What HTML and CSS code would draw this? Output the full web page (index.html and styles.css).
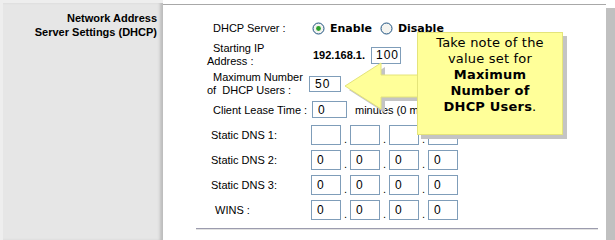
FILE: index.html
```html
<!DOCTYPE html>
<html lang="en">
<head>
    <meta charset="UTF-8">
    <title>DHCP Settings</title>
    <link rel="stylesheet" href="styles.css">
</head>
<body>
    <div class="page">
        <div class="side">
            <h2 class="section-title">Network Address<br>Server Settings (DHCP)</h2>
        </div>

        <div class="main">
            <div class="form">
                <div class="row row-server">
                    <div class="label">DHCP Server :</div>
                    <div class="value">
                        <svg class="radio" width="13" height="13" viewBox="0 0 13 13">
                            <circle cx="6.5" cy="6.5" r="5.5" fill="#f4f4f0" stroke="#1c5180"/>
                            <circle cx="6.5" cy="6.5" r="2.4" fill="#2ca02c"/>
                        </svg>
                        <span class="opt">Enable</span>
                        <svg class="radio" width="13" height="13" viewBox="0 0 13 13">
                            <circle cx="6.5" cy="6.5" r="5.5" fill="#f4f4f0" stroke="#1c5180"/>
                        </svg>
                        <span class="opt">Disable</span>
                    </div>
                </div>

                <div class="row row-start">
                    <div class="label two-line">Starting IP<br>Address :</div>
                    <div class="value">
                        <span class="prefix">192.168.1.</span>
                        <input class="box box-small" type="text" value="100" readonly>
                    </div>
                </div>

                <div class="row row-max">
                    <div class="label two-line">Maximum Number<br>of&nbsp; DHCP Users :</div>
                    <div class="value">
                        <input class="box box-max" type="text" value="50" readonly>
                    </div>
                </div>

                <div class="row">
                    <div class="label">Client Lease Time :</div>
                    <div class="value">
                        <input class="box box-lease" type="text" value="0" readonly>
                        <!-- the rest of this note sits under the callout -->
                        <span class="note">minutes (0 means one day)</span>
                    </div>
                </div>

                <div class="row">
                    <div class="label label-dns">Static DNS 1:</div>
                    <div class="value ip">
                        <input class="box" type="text" value="" readonly><span class="dot">.</span>
                        <input class="box" type="text" value="" readonly><span class="dot">.</span>
                        <input class="box" type="text" value="" readonly><span class="dot">.</span>
                        <input class="box" type="text" value="" readonly>
                    </div>
                </div>

                <div class="row">
                    <div class="label label-dns">Static DNS 2:</div>
                    <div class="value ip">
                        <input class="box" type="text" value="0" readonly><span class="dot">.</span>
                        <input class="box" type="text" value="0" readonly><span class="dot">.</span>
                        <input class="box" type="text" value="0" readonly><span class="dot">.</span>
                        <input class="box" type="text" value="0" readonly>
                    </div>
                </div>

                <div class="row">
                    <div class="label label-dns">Static DNS 3:</div>
                    <div class="value ip">
                        <input class="box" type="text" value="0" readonly><span class="dot">.</span>
                        <input class="box" type="text" value="0" readonly><span class="dot">.</span>
                        <input class="box" type="text" value="0" readonly><span class="dot">.</span>
                        <input class="box" type="text" value="0" readonly>
                    </div>
                </div>

                <div class="row">
                    <div class="label label-wins">WINS :</div>
                    <div class="value ip">
                        <input class="box" type="text" value="0" readonly><span class="dot">.</span>
                        <input class="box" type="text" value="0" readonly><span class="dot">.</span>
                        <input class="box" type="text" value="0" readonly><span class="dot">.</span>
                        <input class="box" type="text" value="0" readonly>
                    </div>
                </div>
            </div>

            <!-- tutorial overlay -->
            <svg class="arrow" width="84" height="60" viewBox="0 0 84 60">
                <polygon points="9,31 45,8 45,20 84,20 84,42 45,42 45,54" fill="#c4c4c4"/>
                <polygon points="5,27 41,4 41,16 84,16 84,38 41,38 41,50" fill="#ffff99" stroke="#e4e47a" stroke-width="1"/>
            </svg>
            <div class="callout">
                <div>Take note of the</div>
                <div>value set for</div>
                <div class="strong">Maximum</div>
                <div class="strong">Number of</div>
                <div><span class="strong">DHCP Users</span>.</div>
            </div>
        </div>

        <div class="edge"></div>
    </div>
</body>
</html>
```

FILE: styles.css
```css
body {
    margin: 0;
    background: white;
    font-family: "Liberation Sans", Arial, sans-serif;
    font-size: 11px;
    color: #000;
}
.page {
    display: flex;
    width: 615px;
    height: 240px;
    overflow: hidden;
}
.side {
    width: 160px;
    flex-shrink: 0;
    background: #e6e6e6;
    border-top: 3px solid #eeeeee;
    border-left: 3px solid #eeeeee;
    box-shadow: inset -4px 0 3px -1px #bdbdbd;
}
.section-title {
    margin: 8px 6px 0 0;
    font-size: 11px;
    font-weight: bold;
    line-height: 14px;
    text-align: right;
}
.main {
    position: relative;
    flex: 1;
    margin-top: 4px;
    border-top: 1px solid #a8a8a8;
    background: white;
}
.edge {
    width: 9px;
    flex-shrink: 0;
    margin-top: 8px;
    background: #c0c0c0;
}
.form {
    margin: 0 8px 0 33px;
    padding-top: 11px;
    padding-bottom: 6px;
    border-bottom: 1px solid #9c9cae;
    box-shadow: 0 1px 0 #e2e2e2;
}
.row {
    display: grid;
    grid-template-columns: 102px 1fr;
    align-items: center;
    height: 25px;
    padding-left: 11px;
}
.row-server { height: 24px; }
.row-start { height: 30px; }
.row-max { height: 27px; }
.label {
    padding-left: 6px;
    white-space: nowrap;
}
.two-line {
    padding-left: 0;
    text-indent: 6px;
    line-height: 13px;
}
.label-dns { padding-left: 4px; }
.label-wins { padding-left: 8px; }
.value {
    display: flex;
    align-items: center;
    white-space: nowrap;
}
.radio {
    margin-left: 3px;
    margin-right: 5px;
}
.opt {
    font-family: "DejaVu Sans", Verdana, sans-serif;
    font-weight: bold;
    font-size: 11px;
    margin-right: 5px;
}
.prefix {
    font-weight: bold;
    margin-left: 4px;
    margin-right: 6px;
}
.box {
    box-sizing: border-box;
    width: 30px;
    height: 20px;
    margin: 0;
    padding: 0 0 0 5px;
    border: 1px solid #7f9db9;
    background: white;
    font-family: "Liberation Sans", Arial, sans-serif;
    font-size: 12px;
    letter-spacing: 1px;
    color: #000;
    outline: none;
}
.box-small {
    height: 17px;
    padding-left: 4px;
}
.box-max {
    width: 32px;
    height: 16px;
    padding-left: 5px;
}
.box-lease {
    width: 35px;
    height: 17px;
    margin-left: 3px;
}
.note { margin-left: 8px; }
.ip { padding-left: 2px; }
.dot {
    width: 9px;
    align-self: flex-end;
    text-align: center;
    line-height: 12px;
}
.arrow {
    position: absolute;
    left: 177px;
    top: 54px;
}
.callout {
    position: absolute;
    left: 254px;
    top: 27px;
    width: 144px;
    height: 99px;
    padding-top: 2px;
    background: #ffff99;
    border: 1px solid #e4e47a;
    box-shadow: 4px 4px 0 #c4c4c4;
    font-family: "DejaVu Sans", Verdana, sans-serif;
    font-size: 13px;
    line-height: 16px;
    letter-spacing: 0.2px;
    text-align: center;
}
.strong { font-weight: bold; }
```
